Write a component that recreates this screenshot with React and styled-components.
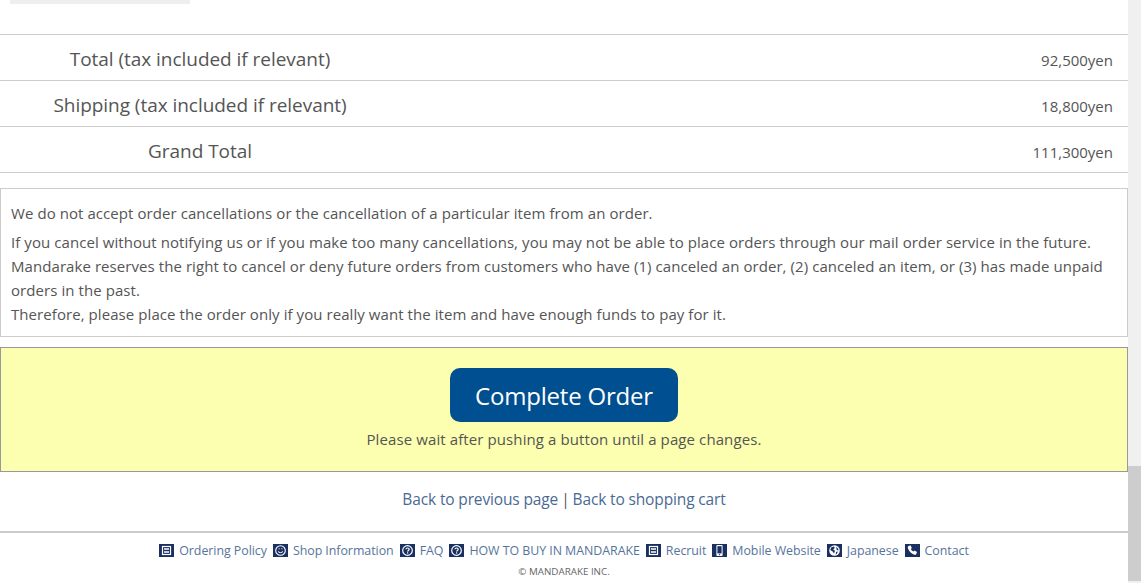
import React from 'react'
import styled, { createGlobalStyle } from 'styled-components'

const GlobalStyle = createGlobalStyle`
  html, body {
    margin: 0;
    padding: 0;
    background: #fff;
    overflow: hidden;
  }
  body {
    font-family: "Open Sans", "Noto Sans", "Liberation Sans", sans-serif;
    color: #555;
  }
`

const Page = styled.div`
  display: flex;
  width: 1141px;
  height: 583px;
  overflow: hidden;
`

const Main = styled.main`
  width: 1128px;
  flex: none;
`

const Scrollbar = styled.div`
  flex: 1;
  background: #f0f0f0;
  padding-top: 466px;
  padding-bottom: 2px;
  box-sizing: border-box;
`

const Thumb = styled.div`
  height: 115px;
  background: #cdcdcd;
`

const Stub = styled.div`
  width: 180px;
  height: 4px;
  margin: 0 0 30px 10px;
  background: #eee;
`

const Totals = styled.div`
  border-top: 1px solid #ccc;
`

const Row = styled.div`
  display: flex;
  align-items: center;
  height: 45px;
  border-bottom: 1px solid #ccc;
`

const Label = styled.div`
  width: 400px;
  padding-top: 2px;
  text-align: center;
  font-size: 19px;
  letter-spacing: -0.04px;
  color: #555;
`

const Value = styled.div`
  flex: 1;
  padding: 5px 15px 0 0;
  text-align: right;
  font-size: 15px;
  color: #555;
`

const Notice = styled.div`
  box-sizing: border-box;
  height: 149px;
  margin: 15px 0 10px;
  padding: 12px 10px 0 10px;
  border: 1px solid #ccc;
  font-size: 15px;
  letter-spacing: 0.07px;
  line-height: 24px;
  color: #555;
`

const NoticeLine = styled.p`
  margin: 0 0 5px;
  white-space: nowrap;
`

const OrderBox = styled.div`
  box-sizing: border-box;
  height: 125px;
  padding-top: 20px;
  display: flex;
  flex-direction: column;
  align-items: center;
  background: #fbffaf;
  border: 1px solid #999;
`

const OrderButton = styled.button`
  width: 228px;
  height: 54px;
  padding: 0;
  border: 0;
  border-radius: 10px;
  background: #004f91;
  color: #fff;
  font-family: inherit;
  font-size: 24px;
  letter-spacing: -0.2px;
`

const WaitText = styled.p`
  margin: 5px 0 0;
  font-size: 15px;
  letter-spacing: 0.1px;
  line-height: 24px;
  color: #555;
`

const BackLinks = styled.div`
  box-sizing: border-box;
  height: 59px;
  padding-bottom: 6px;
  display: flex;
  align-items: center;
  justify-content: center;
  gap: 3px;
  font-size: 15.5px;
  letter-spacing: -0.14px;
  color: #555;
`

const TextLink = styled.a`
  color: #4a6a94;
  text-decoration: none;
`

const Footer = styled.footer`
  border-top: 2px solid #ccc;
  padding-top: 9px;
`

const FooterNav = styled.nav`
  display: flex;
  justify-content: center;
  gap: 6px;
`

const FooterLink = styled.a`
  display: flex;
  align-items: center;
  gap: 5px;
  font-size: 12.4px;
  letter-spacing: -0.04px;
  line-height: 18px;
  color: #56749c;
  text-decoration: none;
  white-space: nowrap;
`

const IconBox = styled.svg`
  width: 15px;
  height: 13px;
  flex: none;
  margin-top: -2px;
`

const Copyright = styled.p`
  margin: 6px 0 0;
  text-align: center;
  font-size: 9.8px;
  line-height: 12px;
  color: #666;
`

const glyphs = {
  doc: (
    <>
      <rect x="3.5" y="2.5" width="8" height="8" fill="none" stroke="#fff" strokeWidth="1.2" />
      <path d="M5 5h5M5 8h5" stroke="#fff" strokeWidth="1.4" />
    </>
  ),
  smile: (
    <>
      <circle cx="7.5" cy="6.5" r="4.8" fill="none" stroke="#fff" strokeWidth="1.1" />
      <path d="M5 7.4c.8 1.6 4.2 1.6 5 0" fill="none" stroke="#fff" strokeWidth="1" />
      <path d="M5.6 4.8h1M8.4 4.8h1" stroke="#fff" strokeWidth="1" />
    </>
  ),
  help: (
    <>
      <circle cx="7.5" cy="6.5" r="4.8" fill="none" stroke="#fff" strokeWidth="1.2" />
      <path d="M5.9 5.3c.2-1.8 3.3-1.7 3.3 0 0 1.1-1.6 1.2-1.6 2.3" fill="none" stroke="#fff" strokeWidth="1.2" />
      <rect x="7" y="8.3" width="1.2" height="1.2" fill="#fff" />
    </>
  ),
  mobile: (
    <>
      <rect x="4.4" y="1" width="6.2" height="11" rx="1" fill="#fff" />
      <rect x="5.4" y="2.2" width="4.2" height="7.2" fill="#1a3060" />
      <rect x="7" y="10.1" width="1.1" height="1.1" fill="#1a3060" />
    </>
  ),
  globe: (
    <>
      <circle cx="7.5" cy="6.5" r="5.3" fill="#fff" />
      <path d="M4.4 3.2l2.6-.8.8 1.6-1.6 1.4 1.8 1.4-1 2.8-1.3-2.2L3.2 6zM9 2.8l2 1.6.5 2-1.7-.4zM9 8l1.9-.4-1.2 2.4-1 .4z" fill="#1a3060" />
    </>
  ),
  phone: (
    <path d="M3.2 2.2l2.2-.9 1.5 2.6-1.1 1.1c.5 1.1 1.4 2 2.6 2.6l1.1-1.1 2.5 1.5-.8 2.2c-.2.5-1 .8-1.8.6C6.4 9.9 3.8 7.3 2.8 4c-.2-.8 0-1.5.4-1.8z" fill="#fff" />
  ),
}

const FooterIcon = ({ name }) => (
  <IconBox viewBox="0 0 15 13" aria-hidden="true">
    <rect width="15" height="13" fill="#1a3060" />
    {glyphs[name]}
  </IconBox>
)

const rows = [
  ['Total (tax included if relevant)', '92,500yen'],
  ['Shipping (tax included if relevant)', '18,800yen'],
  ['Grand Total', '111,300yen'],
]

const footerLinks = [
  ['doc', 'Ordering Policy'],
  ['smile', 'Shop Information'],
  ['help', 'FAQ'],
  ['help', 'HOW TO BUY IN MANDARAKE'],
  ['doc', 'Recruit'],
  ['mobile', 'Mobile Website'],
  ['globe', 'Japanese'],
  ['phone', 'Contact'],
]

export default function App() {
  return (
    <Page>
      <GlobalStyle />
      <Main>
        <Stub />
        <Totals>
          {rows.map(([label, value]) => (
            <Row key={label}>
              <Label>{label}</Label>
              <Value>{value}</Value>
            </Row>
          ))}
        </Totals>
        <Notice>
          <NoticeLine>We do not accept order cancellations or the cancellation of a particular item from an order.</NoticeLine>
          <NoticeLine as="div">
            If you cancel without notifying us or if you make too many cancellations, you may not be able to place orders through our mail order service in the future.
            <br />
            Mandarake reserves the right to cancel or deny future orders from customers who have (1) canceled an order, (2) canceled an item, or (3) has made unpaid
            <br />
            orders in the past.
            <br />
            Therefore, please place the order only if you really want the item and have enough funds to pay for it.
          </NoticeLine>
        </Notice>
        <OrderBox>
          <OrderButton type="button">Complete Order</OrderButton>
          <WaitText>Please wait after pushing a button until a page changes.</WaitText>
        </OrderBox>
        <BackLinks>
          <TextLink href="#">Back to previous page</TextLink>
          <span>|</span>
          <TextLink href="#">Back to shopping cart</TextLink>
        </BackLinks>
        <Footer>
          <FooterNav>
            {footerLinks.map(([icon, text]) => (
              <FooterLink href="#" key={text}>
                <FooterIcon name={icon} />
                {text}
              </FooterLink>
            ))}
          </FooterNav>
          <Copyright>© MANDARAKE INC.</Copyright>
        </Footer>
      </Main>
      <Scrollbar>
        <Thumb />
      </Scrollbar>
    </Page>
  )
}
